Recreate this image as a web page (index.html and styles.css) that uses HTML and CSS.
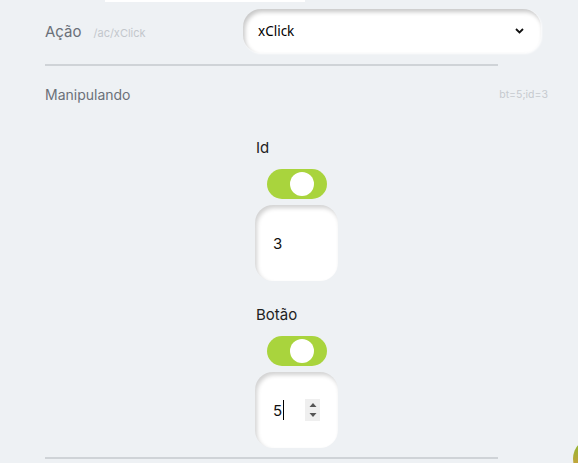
FILE: index.html
```html
<!DOCTYPE html>
<html lang="pt">
<head>
<meta charset="utf-8">
<link rel="stylesheet" href="styles.css">
</head>
<body>
<div class="strip"></div>
<div class="content">
  <div class="action-row">
    <div class="action-label">
      <span class="label">Ação</span>
      <span class="hint">/ac/xClick</span>
    </div>
    <div class="select">
      <span>xClick</span>
      <svg class="chev" width="9" height="6" viewBox="0 0 9 6"><path d="M1 1 L4.5 4.5 L8 1" fill="none" stroke="#111" stroke-width="1.8"/></svg>
    </div>
  </div>
  <div class="rule"></div>
  <div class="section-head">
    <span class="section-title">Manipulando</span>
    <span class="section-hint">bt=5;id=3</span>
  </div>
  <div class="fields">
    <div class="field">
      <div class="field-label">Id</div>
      <div class="toggle"><span class="knob"></span></div>
      <div class="numbox"><span class="val">3</span></div>
    </div>
    <div class="field">
      <div class="field-label">Botão</div>
      <div class="toggle"><span class="knob"></span></div>
      <div class="numbox"><span class="val">5</span><span class="caret"></span>
        <span class="spin">
          <svg width="12" height="22" viewBox="0 0 12 22"><path d="M2.5 8 L6 4 L9.5 8 Z M2.5 14 L6 18 L9.5 14 Z" fill="#555"/></svg>
        </span>
      </div>
    </div>
  </div>
  <div class="rule bottom"></div>
</div>
<div class="fab"></div>
</body>
</html>
```
FILE: styles.css
```css
html, body {
  margin: 0;
  padding: 0;
  background: #eef1f4;
  overflow: hidden;
  height: 463px;
}
body {
  font-family: Inter, "Noto Sans", sans-serif;
}
.strip {
  margin-left: 105px;
  width: 200px;
  height: 2px;
  background: #ffffff;
}
.content {
  padding: 0 30px 0 45px;
}
.action-row {
  display: flex;
  align-items: center;
  margin-top: 7px;
  height: 44px;
}
.action-label {
  width: 198px;
  display: flex;
  align-items: baseline;
  gap: 12px;
}
.label {
  font-size: 15px;
  color: #6b7079;
}
.hint {
  font-size: 11px;
  color: #c3c7cc;
}
.select {
  width: 298px;
  height: 44px;
  box-sizing: border-box;
  background: #fff;
  border-radius: 18px;
  display: flex;
  align-items: center;
  justify-content: space-between;
  padding: 0 17px 0 15px;
  font-family: "Noto Sans", "Open Sans", sans-serif;
  font-size: 13.5px;
  color: #000;
  box-shadow: inset 2px 3px 4px rgba(0,0,0,0.22), 1px 1px 2px rgba(255,255,255,0.9);
}
.chev { display: block; }
.rule {
  width: 453px;
  height: 2px;
  background: #cfd3d7;
  margin-top: 11px;
}
.section-head {
  display: flex;
  justify-content: space-between;
  align-items: center;
  height: 20px;
  margin-top: 18px;
}
.section-title {
  font-size: 14px;
  color: #6b7079;
}
.section-hint {
  font-size: 10.5px;
  color: #c6cacf;
}
.fields {
  display: flex;
  flex-direction: column;
  align-items: center;
  gap: 24px;
  margin-top: 34px;
}
.field {
  width: 83px;
  display: flex;
  flex-direction: column;
  align-items: center;
}
.field-label {
  align-self: flex-start;
  margin-left: 1px;
  font-size: 15px;
  line-height: 20px;
  color: #222;
}
.toggle {
  margin-top: 11px;
  width: 60px;
  height: 30px;
  border-radius: 15px;
  background: #a9d43d;
  position: relative;
  margin-left: 1px;
}
.knob {
  position: absolute;
  top: 3px;
  left: 23px;
  width: 24px;
  height: 24px;
  border-radius: 50%;
  background: #fff;
}
.numbox {
  margin-top: 6px;
  width: 83px;
  height: 76px;
  box-sizing: border-box;
  background: #fff;
  border-radius: 18px;
  display: flex;
  align-items: center;
  padding-left: 18px;
  font-size: 15px;
  color: #111;
  box-shadow: inset 2px 3px 4px rgba(0,0,0,0.18);
}
.caret {
  width: 1px;
  height: 20px;
  background: #000;
  margin-left: 1px;
}
.spin {
  margin-left: 21px;
  width: 15px;
  height: 22px;
  background: #efefef;
  display: flex;
  justify-content: center;
}
.rule.bottom {
  margin-top: 9px;
}
.fab {
  position: fixed;
  left: 573px;
  top: 437px;
  width: 44px;
  height: 44px;
  border-radius: 50%;
  background: linear-gradient(160deg, #7cbf2a 0%, #c9a23e 50%, #e88a4e 100%);
}
```
